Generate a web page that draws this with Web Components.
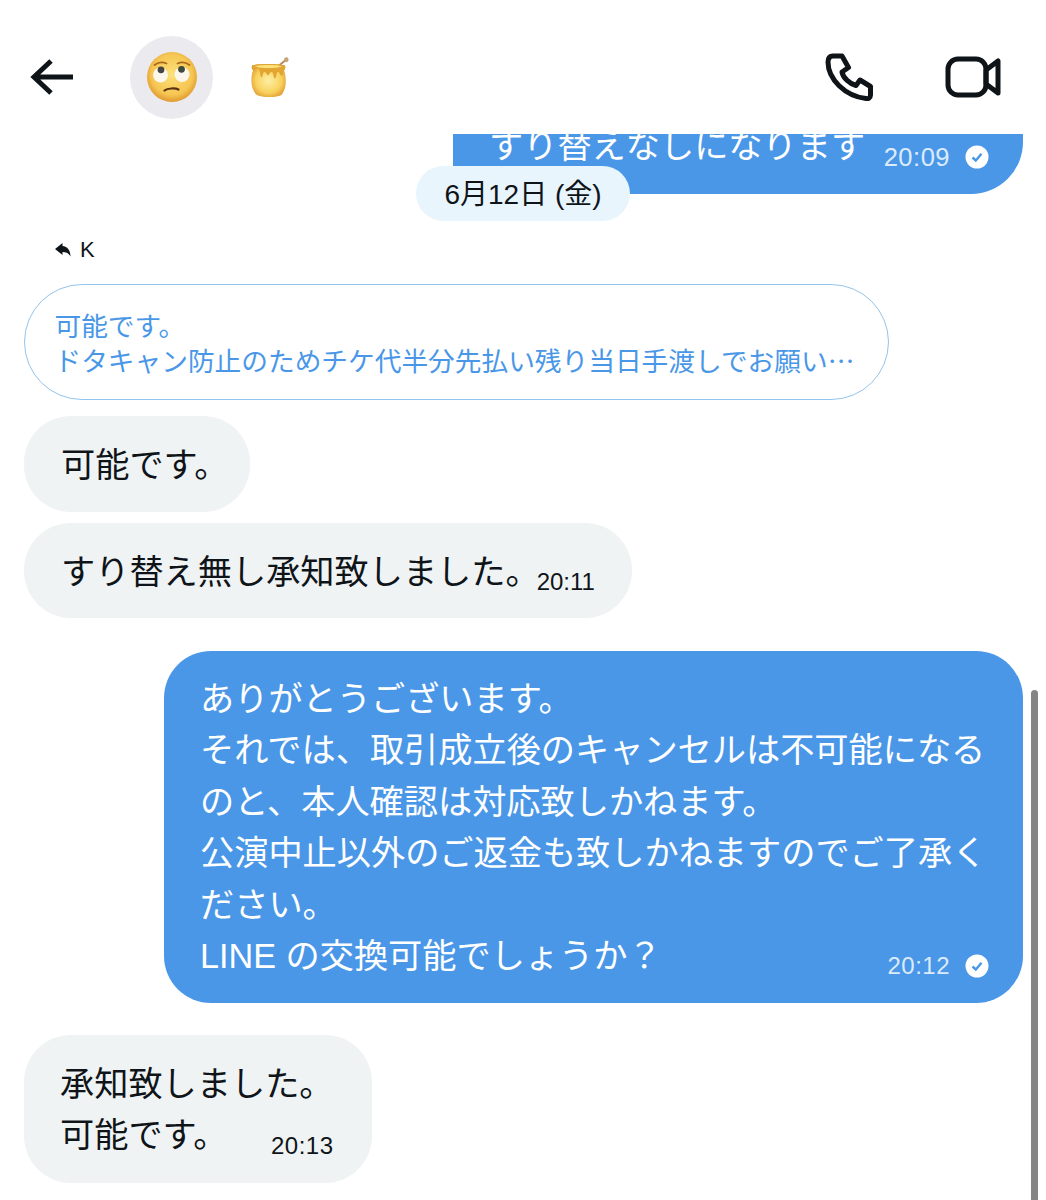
<!DOCTYPE html>
<html lang="ja">
<head>
<meta charset="utf-8">
<title>DM</title>
<style>
    html, body { margin: 0; background: #fff; }
    body { font-family: "Liberation Sans", "Noto Sans CJK JP", sans-serif; }
</style>
</head>
<body>
<chat-app>
    <chat-header slot="header"></chat-header>

    <chat-bubble mine time="20:09" read style="width:570px;margin-top:-13px;--pad:0 34px 22px 36px;--radius:0 0 52px 14px;--time-size:25.500px">すり替えなしになります</chat-bubble>
    <chat-date>6月12日 (金)</chat-date>
    <reply-label>K</reply-label>
    <quote-card>可能です。<br>ドタキャン防止のためチケ代半分先払い残り当日手渡しでお願い…</quote-card>

    <chat-bubble style="margin-top:16px;--pad:24px 21px 20px 37px">可能です。</chat-bubble>
    <chat-bubble time="20:11" style="margin-top:11.400px;--pad:24px 37px 19px 37px;--meta-shift:-2px;--meta-gap:-3px;--time-spacing:0">すり替え無し承知致しました。</chat-bubble>

    <chat-bubble mine stacked time="20:12" read style="width:859px;margin-top:33.400px;--pad:23px 34px 21px 36px;--meta-shift:-1px">ありがとうございます。<br>それでは、取引成立後のキャンセルは不可能になる<br>のと、本人確認は対応致しかねます。<br>公演中止以外のご返金も致しかねますのでご了承く<br>ださい。<br>LINE の交換可能でしょうか？</chat-bubble>

    <chat-bubble stacked time="20:13" style="margin-top:31.600px;--pad:24px 38px 21px 36px;--meta-shift:-1px">承知致しました。<br>可能です。</chat-bubble>
</chat-app>

<script>
class ChatApp extends HTMLElement {
    constructor() {
        super();
        this.attachShadow({ mode: 'open' });
        this.shadowRoot.innerHTML = `
            <style>
                :host { display: block; position: relative; width: 1046px; height: 1200px; overflow: hidden; background: #fff; }
                .frame { display: flex; flex-direction: column; height: 100%; }
                .thread {
                    flex: 1;
                    min-height: 0;
                    overflow: hidden;
                    display: flex;
                    flex-direction: column;
                    align-items: flex-start;
                    padding: 0 23px 0 24px;
                }
                .scrollbar {
                    position: absolute;
                    left: 1031px;
                    top: 690px;
                    width: 7px;
                    height: 520px;
                    border-radius: 4px;
                    background: #858585;
                }
            </style>
            <div class="frame">
                <slot name="header"></slot>
                <div class="thread"><slot></slot></div>
            </div>
            <div class="scrollbar"></div>
        `;
    }
}

class ChatHeader extends HTMLElement {
    constructor() {
        super();
        this.attachShadow({ mode: 'open' });
        this.shadowRoot.innerHTML = `
            <style>
                :host { display: flex; align-items: center; flex: none; height: 134px; box-sizing: border-box; padding: 20px 45px 0 30px; background: #fff; }
                svg { display: block; flex: none; }
                .avatar { width: 83px; height: 83px; margin-left: 56px; border-radius: 50%; background: #ebebef; display: flex; align-items: center; justify-content: center; }
                .pot { margin: 2px 0 0 36px; }
                .actions { margin-left: auto; display: flex; align-items: center; gap: 72px; }
            </style>
            <svg width="44" height="40" viewBox="0 0 44 40" fill="none" stroke="#0f1419" stroke-width="5">
                <path d="M43 20H5M21 4 4 20l17 16"/>
            </svg>
            <div class="avatar">
                <svg width="52" height="52" viewBox="0 0 52 52">
                    <defs>
                        <radialGradient id="face" cx=".5" cy=".45" r=".58">
                            <stop offset="0" stop-color="#fbe17a"/>
                            <stop offset=".7" stop-color="#f6c653"/>
                            <stop offset="1" stop-color="#db9029"/>
                        </radialGradient>
                    </defs>
                    <circle cx="26" cy="26" r="25" fill="url(#face)"/>
                    <path d="M8.500 14C12 11.500 17 11 20.500 12.500M31.500 12.500C35 11 40 11.500 43.500 14" fill="none" stroke="#a8691a" stroke-width="1.800" stroke-linecap="round"/>
                    <circle cx="14.500" cy="24" r="7.500" fill="#fbf7ec"/>
                    <circle cx="36" cy="23.500" r="7.500" fill="#fbf7ec"/>
                    <circle cx="15" cy="18.800" r="3.400" fill="#444"/>
                    <circle cx="35.500" cy="18.300" r="3.400" fill="#3d4a3c"/>
                    <path d="M18.500 39.500C21.500 37 29.500 37 32.500 38.500" fill="none" stroke="#5b3311" stroke-width="2.200" stroke-linecap="round"/>
                </svg>
            </div>
            <svg class="pot" width="40" height="42" viewBox="0 0 40 39" preserveAspectRatio="none">
                <defs>
                    <radialGradient id="jar" cx=".5" cy=".5" r=".62">
                        <stop offset="0" stop-color="#fdeea6"/>
                        <stop offset=".6" stop-color="#f9d25f"/>
                        <stop offset="1" stop-color="#d98f25"/>
                    </radialGradient>
                </defs>
                <path d="M30 8 37 2.500" stroke="#b98a56" stroke-width="1.800" stroke-linecap="round"/>
                <circle cx="37.300" cy="2.500" r="2.300" fill="#c9a27a"/>
                <path d="M3 8C9 6 30 6 36 8c.6 2 0 3.500-1 4.500 2.500 6 3 16-2 22-3 3.500-22 3.500-26 0C1.500 29 1.500 19 4 12.500 3 11.500 2.400 10 3 8Z" fill="url(#jar)"/>
                <path d="M3 8C9 6 30 6 36 8c.6 2 0 3.500-1 4.500-.8 2-1 5-2.500 5s-1.500-3.500-3.500-3.500-1.500 6-3 6-1.500-6-3.500-6-2 3-3.500 3-1.500-3-3.500-3-1.500 5-3 5-1-6-3-8.500C3 11.500 2.400 10 3 8Z" fill="#e2a532"/>
                <path d="M6 8.500C11 7 28 7 33 8.500 28 10.800 11 10.800 6 8.500Z" fill="#fbe27a"/>
            </svg>
            <div class="actions">
                <svg width="48" height="48" viewBox="0 0 48 48" fill="none" stroke="#0f1419" stroke-width="5" stroke-linejoin="round">
                    <path d="M8 3H17L23.500 14.500 17 19C18 25 25 31 31 32.500L35 27 45.500 33.500V42C45.500 45 43 46 41 45.500 20 43 3 26 3 9 3 5 5 3 8 3Z"/>
                </svg>
                <svg width="56" height="42" viewBox="0 0 56 42" fill="none" stroke="#0f1419" stroke-width="5" stroke-linejoin="round">
                    <rect x="3" y="3" width="38" height="36" rx="10"/>
                    <path d="M41 14 53 5V37L41 28Z"/>
                </svg>
            </div>
        `;
    }
}

class ReadCheck extends HTMLElement {
    constructor() {
        super();
        this.attachShadow({ mode: 'open' });
        this.shadowRoot.innerHTML = `
            <style>
                :host { display: block; width: 24px; height: 24px; }
                svg { display: block; }
            </style>
            <svg width="24" height="24" viewBox="0 0 24 24">
                <circle cx="12" cy="12" r="11.500" fill="#fff"/>
                <path d="M7.500 12.500 10.800 15.500 16.500 8.800" fill="none" stroke="#4a97e8" stroke-width="2.400"/>
            </svg>
        `;
    }
}

class ChatBubble extends HTMLElement {
    constructor() {
        super();
        this.attachShadow({ mode: 'open' });
        this.shadowRoot.innerHTML = `
            <style>
                :host {
                    display: flex;
                    box-sizing: border-box;
                    flex: none;
                    padding: var(--pad, 22px 38px);
                    border-radius: var(--radius, 47px);
                    background: #eff3f4;
                    color: #0f1419;
                    font-size: 34.200px;
                    line-height: 51.400px;
                    white-space: nowrap;
                }
                :host([mine]) { align-self: flex-end; background: #4a97e8; color: #fff; }
                :host([stacked]) { flex-direction: column; }
                .meta {
                    display: flex;
                    align-items: center;
                    align-self: flex-end;
                    gap: 15px;
                    flex: none;
                    height: 30px;
                    margin-left: var(--meta-gap, 0);
                    margin-bottom: calc(var(--meta-shift, 0px) * -1);
                    font-size: var(--time-size, 24px);
                    line-height: 30px;
                    letter-spacing: var(--time-spacing, .5px);
                }
                :host([mine]) .meta { color: #dcebfb; margin-left: auto; }
                :host([stacked]) .meta { margin-top: calc(var(--meta-shift, 0px) - 30px); }
                .meta:empty { display: none; }
            </style>
            <div class="text"><slot></slot></div>
            <div class="meta"></div>
        `;
    }

    connectedCallback() {
        const meta = this.shadowRoot.querySelector('.meta');
        const time = this.getAttribute('time');
        if (time) {
            meta.innerHTML = `<span>${time}</span>${this.hasAttribute('read') ? '<read-check></read-check>' : ''}`;
        }
    }
}

class ChatDate extends HTMLElement {
    constructor() {
        super();
        this.attachShadow({ mode: 'open' });
        this.shadowRoot.innerHTML = `
            <style>
                :host {
                    display: block;
                    position: relative;
                    align-self: center;
                    flex: none;
                    margin: -28px 0 0 -1px;
                    padding: 0 28.500px;
                    height: 55px;
                    border-radius: 27.500px;
                    background: #e8f5fd;
                    color: #0f1419;
                    font-size: 28px;
                    line-height: 57px;
                    white-space: nowrap;
                }
            </style>
            <slot></slot>
        `;
    }
}

class ReplyLabel extends HTMLElement {
    constructor() {
        super();
        this.attachShadow({ mode: 'open' });
        this.shadowRoot.innerHTML = `
            <style>
                :host { display: flex; align-items: center; gap: 9px; flex: none; height: 24px; margin: 17px 0 22px 31px; color: #0f1419; font-size: 22px; line-height: 24px; }
                svg { display: block; }
            </style>
            <svg width="16" height="14" viewBox="0 0 16 14" fill="#0f1419">
                <path d="M7.500 0 0 6 7.500 12V9C11 9 13.500 10 15.500 13.500 15.500 7.500 12.500 3.500 7.500 3Z"/>
            </svg>
            <slot></slot>
        `;
    }
}

class QuoteCard extends HTMLElement {
    constructor() {
        super();
        this.attachShadow({ mode: 'open' });
        this.shadowRoot.innerHTML = `
            <style>
                :host {
                    display: block;
                    box-sizing: border-box;
                    flex: none;
                    width: 865px;
                    height: 116px;
                    padding: 21.500px 20px 0 29.500px;
                    border: 1.500px solid #93c4ec;
                    border-radius: 58px;
                    color: #4a97e8;
                    font-family: "Noto Sans CJK JP", sans-serif;
                    font-size: 26.700px;
                    line-height: 35px;
                    white-space: nowrap;
                }
            </style>
            <slot></slot>
        `;
    }
}

customElements.define('chat-app', ChatApp);
customElements.define('chat-header', ChatHeader);
customElements.define('read-check', ReadCheck);
customElements.define('chat-bubble', ChatBubble);
customElements.define('chat-date', ChatDate);
customElements.define('reply-label', ReplyLabel);
customElements.define('quote-card', QuoteCard);
</script>
</body>
</html>
